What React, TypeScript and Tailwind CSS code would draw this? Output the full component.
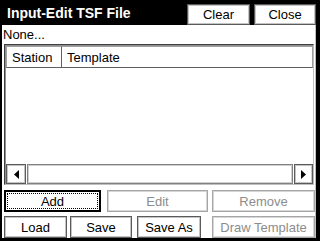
import React from "react";

const font = { fontFamily: '"Liberation Sans", Arial, sans-serif' };

function Btn({
  label,
  w,
  disabled,
  focus,
  className = "",
}: {
  label: string;
  w: string;
  disabled?: boolean;
  focus?: boolean;
  className?: string;
}) {
  if (focus) {
    return (
      <div className={`${w} h-full border-2 border-black bg-white p-[1px] ${className}`}>
        <div className="w-full h-full border border-dotted border-black flex items-center justify-center text-[13px] text-black leading-none">
          {label}
        </div>
      </div>
    );
  }
  return (
    <div
      className={`${w} h-full bg-white flex items-center justify-center text-[13px] leading-none border ${
        disabled
          ? "border-[#a6a6a6] text-[#8c8c8c] shadow-[inset_1px_1px_0_#d6d6d6,inset_-1px_-1px_0_#d6d6d6]"
          : "border-[#5a5a5a] text-black shadow-[inset_1px_1px_0_#c4c4c4,inset_-1px_-1px_0_#c4c4c4]"
      } ${className}`}
    >
      {label}
    </div>
  );
}

export default function App() {
  return (
    <div className="w-[320px] h-[241px] bg-black flex flex-col overflow-hidden" style={font}>
      {/* Title bar */}
      <div className="h-[25px] flex items-end shrink-0">
        <div className="self-center pl-[7px] text-white font-bold text-[14px] leading-none">
          Input-Edit TSF File
        </div>
        <Btn label="Clear" w="w-[63px]" className="ml-auto !h-[21px]" />
        <Btn label="Close" w="w-[62px]" className="ml-[4px] mr-[4px] !h-[21px]" />
      </div>

      {/* Body */}
      <div className="flex-1 ml-[2px] mr-[4px] mb-[3px] bg-white border-r border-[#c0c0c0] flex flex-col">
        <div className="h-[19px] pl-[1px] flex items-center text-[13px] text-black leading-none shrink-0">
          None...
        </div>

        {/* List view */}
        <div className="h-[141px] ml-[2px] mr-[1px] shrink-0 border-t border-l border-[#404040] border-b border-r border-b-[#c0c0c0] border-r-[#c0c0c0] flex flex-col">
          <div className="flex-1 flex flex-col border-t border-l border-[#909090]">
            <div className="h-[22px] flex shrink-0 text-[13px] leading-none text-black">
              <div className="w-[56px] h-full flex items-center pl-[5px] border border-[#a0a0a0] border-r-[#606060] border-b-[#606060] shadow-[inset_1px_1px_0_#ffffff]">
                Station
              </div>
              <div className="flex-1 h-full flex items-center pl-[5px] border-t border-b border-r border-[#a0a0a0] border-b-[#606060]">
                Template
              </div>
            </div>
            <div className="flex-1" />
            {/* Scrollbar */}
            <div className="h-[20px] flex shrink-0">
              <div className="w-[20px] h-full border border-[#5a5a5a] shadow-[inset_1px_1px_0_#c4c4c4,inset_-1px_-1px_0_#c4c4c4] flex items-center justify-center">
                <svg width="5" height="9" viewBox="0 0 5 9">
                  <polygon points="5,0 0,4.5 5,9" fill="black" />
                </svg>
              </div>
              <div className="flex-1 h-full border border-[#808080] shadow-[inset_1px_1px_0_#d0d0d0,inset_-1px_-1px_0_#d0d0d0] mx-[1px]" />
              <div className="w-[19px] h-full border border-[#5a5a5a] shadow-[inset_1px_1px_0_#c4c4c4,inset_-1px_-1px_0_#c4c4c4] flex items-center justify-center">
                <svg width="5" height="9" viewBox="0 0 5 9">
                  <polygon points="0,0 5,4.5 0,9" fill="black" />
                </svg>
              </div>
            </div>
          </div>
        </div>

        {/* Buttons row 1 */}
        <div className="h-[22px] mt-[5px] flex shrink-0 pl-[2px]">
          <Btn label="Add" w="w-[97px]" focus />
          <Btn label="Edit" w="w-[101px]" disabled className="ml-[6px]" />
          <Btn label="Remove" w="w-[103px]" disabled className="ml-[4px]" />
        </div>

        {/* Buttons row 2 */}
        <div className="h-[22px] mt-[4px] flex shrink-0 pl-[2px]">
          <Btn label="Load" w="w-[63px]" />
          <Btn label="Save" w="w-[62px]" className="ml-[3px]" />
          <Btn label="Save As" w="w-[64px]" className="ml-[5px]" />
          <Btn label="Draw Template" w="w-[103px]" disabled className="ml-[11px]" />
        </div>
      </div>
    </div>
  );
}
